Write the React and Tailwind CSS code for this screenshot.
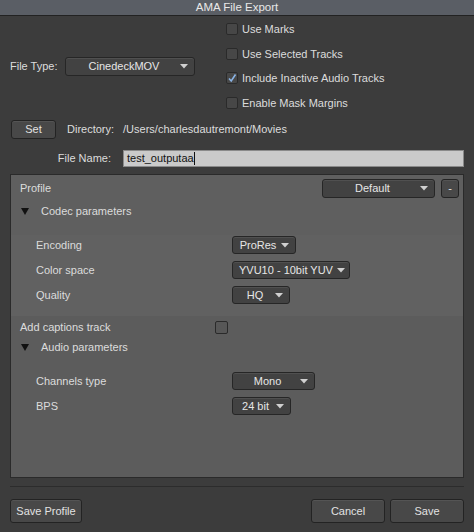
import React from "react"

function Dropdown({ label, className = "" }) {
  return (
    <div
      className={`flex items-center bg-[#424242] border border-[#262626] rounded-[3px] shadow-[inset_0_1px_0_rgba(255,255,255,0.08)] text-[#e6e6e6] ${className}`}
    >
      <span className="flex-1 text-center pl-[6px] whitespace-nowrap">{label}</span>
      <svg width="8" height="5" viewBox="0 0 8 5" className="ml-[4px] mr-[6px] shrink-0">
        <path d="M0 0 L8 0 L4 4.5 Z" fill="#d0d0d0" />
      </svg>
    </div>
  )
}

function Checkbox({ checked }) {
  return (
    <div className="w-[12px] h-[12px] rounded-[2px] border border-[#2a2a2a] bg-[#474747] flex items-center justify-center shrink-0">
      {checked && (
        <svg width="10" height="10" viewBox="0 0 10 10">
          <path d="M2 5.5 L4.2 8 L8.5 1.5" stroke="#8ab4e6" strokeWidth="1.6" fill="none" />
        </svg>
      )}
    </div>
  )
}

function Button({ children, className = "" }) {
  return (
    <div
      className={`flex items-center justify-center bg-[#484848] border border-[#232323] rounded-[3px] shadow-[inset_0_1px_0_rgba(255,255,255,0.07)] text-[#e2e2e2] ${className}`}
    >
      {children}
    </div>
  )
}

function Triangle() {
  return (
    <svg width="8" height="8" viewBox="0 0 8 8" className="shrink-0">
      <path d="M0 1 L8 1 L4 8 Z" fill="#111" />
    </svg>
  )
}

export default function App() {
  const checks = [
    { label: "Use Marks", checked: false },
    { label: "Use Selected Tracks", checked: false },
    { label: "Include Inactive Audio Tracks", checked: true },
    { label: "Enable Mask Margins", checked: false },
  ]

  return (
    <div
      className="w-[474px] h-[532px] bg-[#3c3c3c] text-[11px] text-[#dcdcdc] flex flex-col overflow-hidden"
      style={{ fontFamily: '"Liberation Sans", Arial, sans-serif' }}
    >
      {/* title bar */}
      <div className="h-[16px] shrink-0 bg-[#5a5e65] border-b border-[#222] flex items-center justify-center text-[#e8e8e8] text-[11.5px]">
        AMA File Export
      </div>

      {/* top options */}
      <div className="flex pt-[1px]">
        <div className="w-[226px] flex items-center pl-[10px]">
          <span className="w-[55px]">File Type:</span>
          <Dropdown label="CinedeckMOV" className="w-[130px] h-[19px]" />
        </div>
        <div className="flex flex-col">
          {checks.map((c, i) => (
            <div key={i} className="h-[24.5px] flex items-center gap-[4px]">
              <Checkbox checked={c.checked} />
              <span>{c.label}</span>
            </div>
          ))}
        </div>
      </div>

      {/* directory */}
      <div className="flex items-center mt-[5px] pl-[11px] h-[19px]">
        <Button className="w-[45px] h-[19px]">Set</Button>
        <span className="ml-[11px]">Directory:</span>
        <span className="ml-[9px]">/Users/charlesdautremont/Movies</span>
      </div>

      {/* file name */}
      <div className="flex items-center mt-[11px] h-[17px]">
        <span className="w-[111px] text-right">File Name:</span>
        <div className="ml-[12px] w-[341px] h-[17px] bg-[#cacaca] border border-[#8a8a8a] text-[#111] flex items-center pl-[3px]">
          test_outputaa
          <span className="inline-block w-[1px] h-[13px] bg-[#111]" />
        </div>
      </div>

      {/* profile panel */}
      <div className="mt-[7px] mx-[10px] h-[304px] bg-[#5f5f5f] border border-[#2a2a2a] flex flex-col">
        <div className="flex items-center h-[21px] mt-[3px] pl-[9px] pr-[4px]">
          <span className="flex-1">Profile</span>
          <Dropdown label="Default" className="w-[113px] h-[19px]" />
          <Button className="ml-[6px] w-[18px] h-[19px] text-[#8a8a8a]">-</Button>
        </div>
        <div className="flex items-center h-[24px] pl-[10px] gap-[12px]">
          <Triangle />
          <span>Codec parameters</span>
        </div>

        <div className="mt-[12px] bg-[#616161] pt-[1px] pb-[12px] flex flex-col gap-[7px]">
          <div className="flex items-center h-[18px] pl-[25px]">
            <span className="w-[196px]">Encoding</span>
            <Dropdown label="ProRes" className="w-[64px] h-[18px]" />
          </div>
          <div className="flex items-center h-[18px] pl-[25px]">
            <span className="w-[196px]">Color space</span>
            <Dropdown label="YVU10 - 10bit YUV" className="w-[118px] h-[18px]" />
          </div>
          <div className="flex items-center h-[18px] pl-[25px]">
            <span className="w-[196px]">Quality</span>
            <Dropdown label="HQ" className="w-[58px] h-[18px]" />
          </div>
        </div>

        <div className="flex-1 bg-[#5c5c5c] flex flex-col">
          <div className="flex items-center h-[22px] pl-[9px] pt-[1px]">
            <span className="w-[195px]">Add captions track</span>
            <div className="w-[13px] h-[13px] rounded-[2px] border border-[#2a2a2a] bg-[#575757]" />
          </div>
          <div className="flex items-center h-[18px] pl-[10px] gap-[12px]">
            <Triangle />
            <span>Audio parameters</span>
          </div>
          <div className="mt-[16px] flex flex-col gap-[7px]">
            <div className="flex items-center h-[18px] pl-[25px]">
              <span className="w-[196px]">Channels type</span>
              <Dropdown label="Mono" className="w-[83px] h-[18px]" />
            </div>
            <div className="flex items-center h-[18px] pl-[25px]">
              <span className="w-[196px]">BPS</span>
              <Dropdown label="24 bit" className="w-[59px] h-[18px]" />
            </div>
          </div>
        </div>
      </div>

      {/* separator */}
      <div className="mt-[8px] mx-[10px] h-[1px] bg-[#2c2c2c]" />

      {/* footer buttons */}
      <div className="flex items-center mt-[12px] px-[10px]">
        <Button className="w-[72px] h-[24px]">Save Profile</Button>
        <div className="flex-1" />
        <Button className="w-[74px] h-[24px]">Cancel</Button>
        <Button className="ml-[5px] w-[74px] h-[24px]">Save</Button>
      </div>
    </div>
  )
}
